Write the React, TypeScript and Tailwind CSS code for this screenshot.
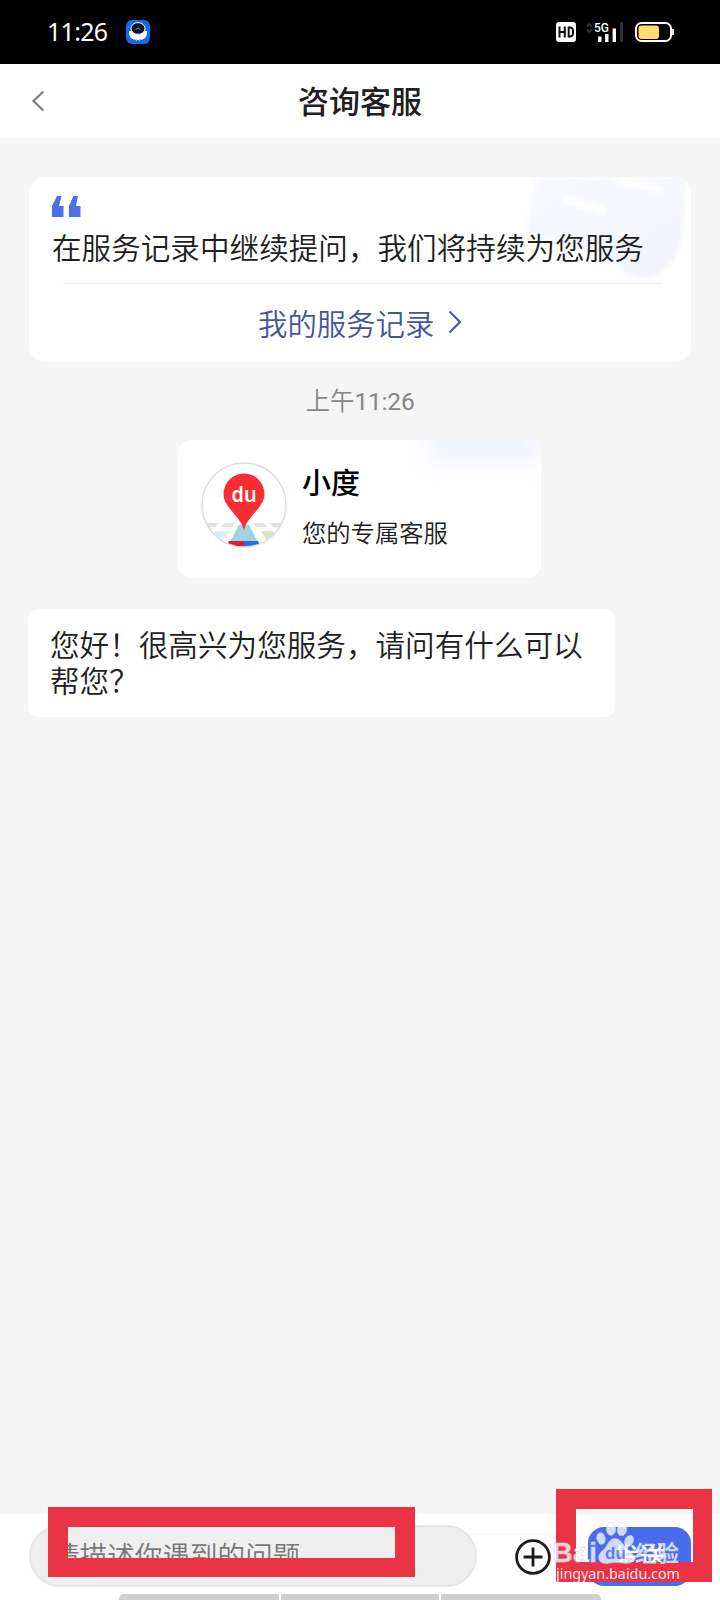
const cjk = "font-['Noto_Sans_CJK_SC','Noto_Sans',sans-serif]";

function StatusBar() {
  return (
    <header className="flex h-16 shrink-0 items-center bg-black pr-[46px] pl-[47px] text-white">
      <span className="w-[79px] pb-px font-['Noto_Sans',sans-serif] text-[25px] leading-none tracking-[-0.7px]">11:26</span>
      <svg className="h-6 w-6" viewBox="0 0 24 24">
        <rect width="24" height="24" rx="6" fill="#116ce6" />
        <path d="M3 11Q2 20 12 20T21 11Z" fill="#fff" />
        <ellipse cx="12" cy="8.500" rx="7" ry="5.900" fill="#06101f" stroke="#fff" strokeWidth="1" />
        <path d="M9.600 9.800 12 7.800l2.400 2" fill="none" stroke="#5aa5a0" strokeWidth="1" />
        <path d="M10.500 19.500v1.500M13.500 19.500v1.500M12 13v1.500" stroke="#77c6b5" strokeWidth="1.2" />
      </svg>
      <svg className="ml-auto h-6 w-[120px]" viewBox="554 20 120 24" fill="none">
        <rect x="556" y="22" width="20" height="20" rx="3" fill="#fff" />
        <path d="M559.500 26.500v11M564.800 26.500v11M559.500 32h5.300M568.700 27.500v9h1.300q3-.2 3-3v-3q0-2.800-3-3z" stroke="#111" strokeWidth="2" />
        <path d="m587 26.500 2.300-2.500 2.300 2.500m-4.600 3 2.300 2.500 2.300-2.500" stroke="#444" strokeWidth="1.300" />
        <path d="M599.800 36.500V42M606.800 34V42M614.300 28.500V42" stroke="#fff" strokeWidth="3.400" />
        <path d="M621.600 22V42" stroke="#333" strokeWidth="3" />
        <text x="594" y="32" fill="#fff" fontFamily="Roboto" fontSize="13" fontWeight="500" textLength="15" lengthAdjust="spacingAndGlyphs">5G</text>
        <rect x="636" y="23" width="35" height="18" rx="5.500" stroke="#fff" strokeWidth="2" />
        <rect x="638.500" y="25.500" width="20.500" height="13.500" rx="3" fill="#f9dc74" />
        <path d="M673 29v6" stroke="#fff" strokeWidth="2" />
      </svg>
    </header>
  );
}

function TitleBar() {
  return (
    <div className="grid h-[74px] shrink-0 grid-cols-[80px_1fr_80px] items-center bg-white">
      <svg className="ml-[30px] h-6 w-4" viewBox="0 0 16 24" fill="none">
        <path d="M13.300 2.500 3.500 12l9.800 9.500" stroke="#7e7e7e" strokeWidth="2.200" />
      </svg>
      <h1 className="pb-1 text-center text-[31px] leading-none font-medium text-[#202020]">咨询客服</h1>
    </div>
  );
}

function RecordsCard() {
  return (
    <section className="relative ml-[29px] mt-[39px] flex h-[185px] w-[662px] shrink-0 flex-col overflow-hidden rounded-[16px] bg-white">
      <svg className="absolute top-0 right-0 h-[104px] w-[166px]" viewBox="0 0 166 104">
        <defs>
          <linearGradient id="glow" x1="0" y1="0" x2="1" y2="1">
            <stop offset="0" stopColor="#f7f9fe" />
            <stop offset="1" stopColor="#f2f3fe" />
          </linearGradient>
          <filter id="soft">
            <feGaussianBlur stdDeviation="2" />
          </filter>
        </defs>
        <g filter="url(#soft)">
          <path d="M12 0H160V32Q160 78 136 96Q111 109 94 91L66 73L4 57V37Z" fill="url(#glow)" />
          <path d="M42 24 78 33M95 4l38 8" stroke="#fff" strokeWidth="8" strokeLinecap="round" />
        </g>
      </svg>
      <svg className="relative mt-[19px] ml-[23px] h-[22px] w-[29px] shrink-0" viewBox="0 0 29 22" fill="#4b6fe7">
        <path d="M0 21V10L5 0H9.500L7 10H11.500V21ZM17 21V10L21.500 0H26L24 10H28.500V21Z" />
      </svg>
      <p className="relative mt-[12px] ml-[23px] text-[29.6px] leading-[34px] font-[350] whitespace-nowrap text-[#202020]">
        在服务记录中继续提问，我们将持续为您服务
      </p>
      <div className="mt-[19px] ml-[34px] h-px w-[599px] shrink-0 bg-[#ededed]" />
      <a className="mt-[20px] ml-[229px] flex h-9 items-center text-[29.4px] leading-9 font-[350] text-[#43549a]">
        我的服务记录
        <svg className="ml-[13px] h-6 w-4" viewBox="0 0 16 24" fill="none">
          <path d="m2.500 1.500 10.500 10.500-10.500 10.500" stroke="#4c5b9c" strokeWidth="2.200" />
        </svg>
      </a>
    </section>
  );
}

function Avatar() {
  return (
    <svg className="h-[86px] w-[86px] shrink-0" viewBox="0 0 86 86">
      <defs>
        <clipPath id="disc">
          <circle cx="43" cy="43" r="42" />
        </clipPath>
      </defs>
      <circle cx="43" cy="43" r="42" fill="#fff" />
      <g clipPath="url(#disc)">
        <path d="M0 61H86V86H0Z" fill="#fbfcfb" />
        <path d="M6 61H36L31 65H4ZM50 61H80L84 65H56Z" fill="#e2e2e2" />
        <path d="M12 69H29L20 80H8Z" fill="#dceff5" />
        <path d="M60 69H76L79 77L69 83Z" fill="#d3e8bf" />
        <path d="M36 61 22 86M50 61 64 86M22 60 8 74M64 60 80 74" stroke="#fff" strokeWidth="3.500" />
        <path d="M38 63H48L57 80H29Z" fill="#a3d4e2" />
        <path d="M28 79H43V86H25Z" fill="#d3213b" />
        <path d="M43 79H57L60 86H43Z" fill="#286edc" />
      </g>
      <circle cx="43" cy="43" r="42" fill="none" stroke="#dedede" strokeWidth="1.500" />
      <path d="M43 69C41 55 22.500 46 22.500 32a20.500 20.500 0 0 1 41 0C63.500 46 45 55 43 69Z" fill="#f62e34" />
      <text x="43" y="40" textAnchor="middle" fill="#fff" fontFamily="Noto Sans" fontWeight="600" fontSize="21" textLength="25" lengthAdjust="spacingAndGlyphs">du</text>
    </svg>
  );
}

function AgentCard() {
  return (
    <section className="relative ml-[178px] mt-[19px] flex h-[138px] w-[363px] shrink-0 overflow-hidden rounded-[14px] bg-white pt-[22px] pl-[23px]">
      <div className="absolute -top-6 right-0 h-12 w-28 bg-[#f1f4fe] blur-[10px]" />
      <Avatar />
      <div className="relative ml-[15px] flex flex-col">
        <h2 className="mt-px text-[29px] leading-[36px] font-medium text-black">小度</h2>
        <p className="mt-[18px] text-[24.3px] leading-[30px] font-[350] text-[#202020]">您的专属客服</p>
      </div>
    </section>
  );
}

function Composer() {
  return (
    <footer className="relative flex h-[86px] shrink-0 items-start bg-white pl-[29px]">
      <div className="absolute top-[20px] left-[460px] h-px w-[100px] bg-[#f4f4f4]" />
      <div className="relative mt-[11px] flex h-[62px] w-[448px] items-center rounded-full border-2 border-[#e6e6e6] bg-[#efefef] pb-[2px] pl-[21px] text-[27.6px] leading-none font-[350] text-[#777]">
        请描述你遇到的问题
      </div>
      <svg className="mt-[25px] ml-[38px] h-9 w-9" viewBox="0 0 36 36" fill="none" stroke="#1c1c1c" strokeWidth="2.800">
        <circle cx="18" cy="18" r="16.400" />
        <path d="M8.500 18h19M18 8.500v19" />
      </svg>
      <button className="mt-[13px] ml-[37px] flex h-[59px] w-[103px] items-center justify-center rounded-[16px] bg-[#4a6bea] pb-[2px] text-[26px] leading-none font-medium text-white">
        发送
      </button>
      <div className="absolute bottom-0 left-[119px] flex h-[6px] w-[482px] gap-[2px] overflow-hidden rounded-t-[5px]">
        <span className="w-[160px] bg-[#d0d0d0]" />
        <span className="w-[158px] bg-[#d0d0d0]" />
        <span className="flex-1 bg-[#d0d0d0]" />
      </div>
      <div className="absolute -top-[7px] left-[48px] h-[70px] w-[367px] border-[20px] border-b-[19px] border-[#ea3446]" />
      <div className="absolute -top-[25px] left-[556px] h-[93px] w-[156px] border-[20px] border-r-[19px] border-[#ea3446]" />
      <svg className="absolute top-[4px] left-[550px] h-[72px] w-[140px]" viewBox="550 1518 140 72" fill="#fff" fillOpacity=".75">
        <text x="552" y="1562" stroke="#c9cfe6" strokeOpacity=".6" strokeWidth=".8" fontFamily="Liberation Sans" fontWeight="700" fontSize="28" textLength="45" lengthAdjust="spacingAndGlyphs">Bai</text>
        <g stroke="#c9cfe6" strokeOpacity=".6" strokeWidth=".8">
          <ellipse cx="601" cy="1538.500" rx="4.200" ry="6" transform="rotate(-12 601 1538.500)" />
          <ellipse cx="611" cy="1529" rx="4.700" ry="6.400" />
          <ellipse cx="622" cy="1529.500" rx="4.700" ry="6.400" transform="rotate(10 622 1529.500)" />
          <ellipse cx="629" cy="1541" rx="4.200" ry="6" transform="rotate(25 629 1541)" />
          <path d="M615 1538.500C622 1538.500 623 1547 630 1551C636 1556 634 1564 626 1563.500Q615 1561.500 607 1563.500C598 1564 596 1556 602 1551C608 1547 608 1538.500 615 1538.500Z" />
        </g>
        <text x="605" y="1559" fill="#4a6bea" fillOpacity=".85" fontFamily="Liberation Sans" fontWeight="700" fontSize="17">du</text>
        <text x="635" y="1560.500" fontFamily="Noto Sans CJK SC" fontWeight="700" fontSize="22">经验</text>
        <text x="556" y="1579" fillOpacity=".9" fontFamily="Noto Sans" fontSize="14.500" textLength="124" lengthAdjust="spacingAndGlyphs">jingyan.baidu.com</text>
      </svg>
    </footer>
  );
}

export default function App() {
  return (
    <div className={`flex h-[1600px] w-[720px] flex-col overflow-hidden bg-[#f5f5f5] ${cjk}`}>
      <StatusBar />
      <TitleBar />
      <main className="flex min-h-0 flex-1 flex-col">
        <RecordsCard />
        <time className="mt-[20px] mb-[3px] flex h-9 shrink-0 items-baseline justify-center text-[24.5px] leading-9 font-[350] text-[#868686]">
          上午<span className="font-['Roboto',sans-serif] font-normal tracking-[-0.2px]">11:26</span>
        </time>
        <AgentCard />
        <div className="ml-[28px] mt-[31px] h-[108px] w-[587px] shrink-0 rounded-[10px] bg-white pt-[17px] pl-[22px] text-[29.6px] leading-9 font-[350] whitespace-nowrap text-[#202020]">
          <p>您好！很高兴为您服务，请问有什么可以</p>
          <p>帮您？</p>
        </div>
      </main>
      <Composer />
    </div>
  );
}
